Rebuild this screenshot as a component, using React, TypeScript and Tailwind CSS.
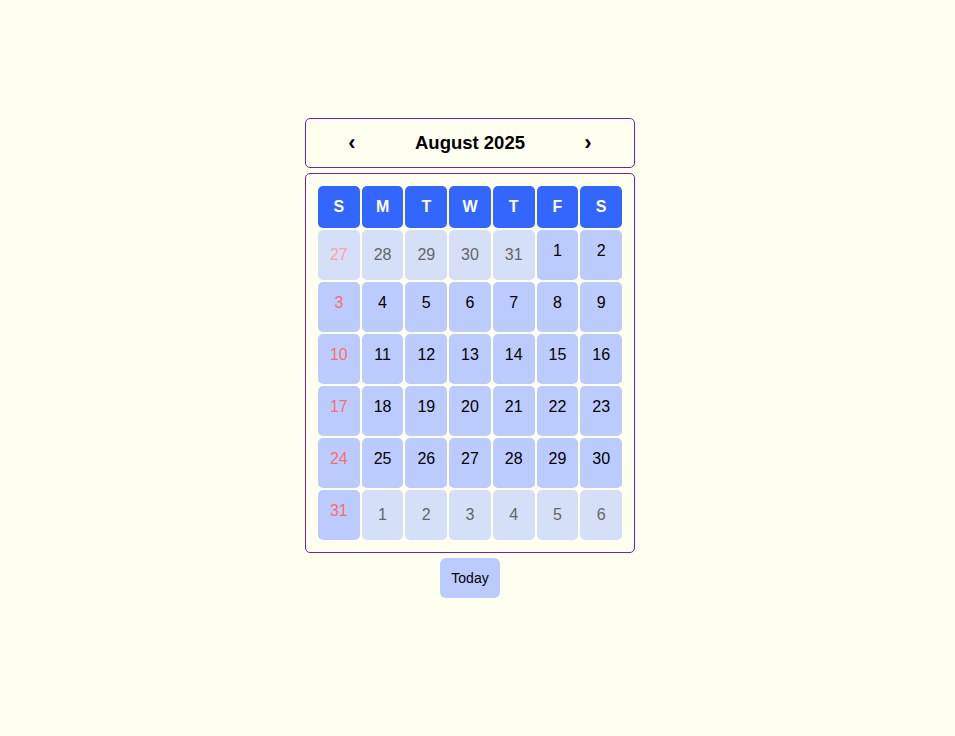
import React from "react";

const weekdays = ["S", "M", "T", "W", "T", "F", "S"];

type Day = { n: number; current: boolean };

function buildDays(): Day[] {
  const days: Day[] = [];
  // July tail
  for (let n = 27; n <= 31; n++) days.push({ n, current: false });
  for (let n = 1; n <= 31; n++) days.push({ n, current: true });
  for (let n = 1; n <= 6; n++) days.push({ n, current: false });
  return days;
}

export default function App() {
  const days = buildDays();

  return (
    <div className="min-h-screen w-full bg-[#fffff0] font-['Liberation_Sans',Arial,sans-serif]">
      <div className="w-[940px] flex flex-col items-center pt-[118px]">
        {/* Month header */}
        <div className="w-[330px] h-[50px] border border-[#7b1fa2] rounded-[5px] flex items-center justify-between px-[30px]">
          <button className="w-8 h-8 flex items-center justify-center text-[22px] font-bold text-black leading-none">
            ‹
          </button>
          <h2 className="text-[18.5px] font-bold text-black">August 2025</h2>
          <button className="w-8 h-8 flex items-center justify-center text-[22px] font-bold text-black leading-none">
            ›
          </button>
        </div>

        {/* Calendar grid */}
        <div className="mt-[5px] w-[330px] border border-[#7b1fa2] rounded-[5px] p-3">
          <div className="grid grid-cols-7 gap-[2px]">
            {weekdays.map((d, i) => (
              <div
                key={i}
                className="h-[42px] rounded-[5px] bg-[#3366ff] text-white font-bold text-[16px] flex items-center justify-center"
              >
                {d}
              </div>
            ))}
            {days.map((d, i) => {
              const sunday = i % 7 === 0;
              let color = d.current ? "text-black" : "text-[#666666]";
              if (sunday) color = d.current ? "text-[#ff6b6b]" : "text-[#ffa3a3]";
              return (
                <div
                  key={i}
                  className={
                    "h-[50px] rounded-[5px] flex items-center justify-center text-[16px] " +
                    (d.current ? "bg-[#bccbfd] pb-2 " : "bg-[#d5dff8] ") +
                    color
                  }
                >
                  {d.n}
                </div>
              );
            })}
          </div>
        </div>

        <button className="mt-[5px] w-[60px] h-10 rounded-[6px] bg-[#bccbfd] text-[14px] text-black">
          Today
        </button>
      </div>
    </div>
  );
}
